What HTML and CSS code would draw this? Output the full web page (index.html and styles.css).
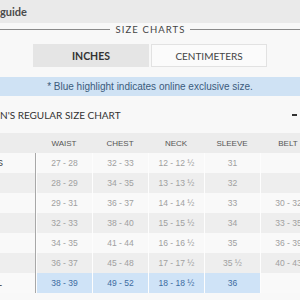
FILE: index.html
```html
<!DOCTYPE html>
<html>
<head>
<meta charset="utf-8">
<link rel="stylesheet" href="styles.css">
</head>
<body>
<div class="top"><span class="crumb">guide</span></div>
<div class="main">
  <div class="title"><span class="rule"></span><h1>SIZE CHARTS</h1><span class="rule"></span></div>
  <div class="tabs">
    <div class="tab active">INCHES</div>
    <div class="tab">CENTIMETERS</div>
  </div>
  <div class="note">* Blue highlight indicates online exclusive size.</div>
  <div class="chart-head"><h2>N'S REGULAR SIZE CHART</h2><span class="toggle"></span></div>
  <div class="grid">
    <div class="hd"></div><div class="hd">WAIST</div><div class="hd">CHEST</div><div class="hd">NECK</div><div class="hd">SLEEVE</div><div class="hd">BELT</div>

    <div class="lab"><span>XXS</span></div><div class="c">27 - 28</div><div class="c">32 - 33</div><div class="c">12 - 12 ½</div><div class="c">31</div><div class="c"></div>
    <div class="lab alt"><span>XS</span></div><div class="c alt">28 - 29</div><div class="c alt">34 - 35</div><div class="c alt">13 - 13 ½</div><div class="c alt">32</div><div class="c alt"></div>
    <div class="lab"><span>S</span></div><div class="c">29 - 31</div><div class="c">36 - 37</div><div class="c">14 - 14 ½</div><div class="c">33</div><div class="c">30 - 32</div>
    <div class="lab alt"><span>M</span></div><div class="c alt">32 - 33</div><div class="c alt">38 - 40</div><div class="c alt">15 - 15 ½</div><div class="c alt">34</div><div class="c alt">33 - 35</div>
    <div class="lab"><span>L</span></div><div class="c">34 - 35</div><div class="c">41 - 44</div><div class="c">16 - 16 ½</div><div class="c">35</div><div class="c">36 - 39</div>
    <div class="lab alt"><span>XL</span></div><div class="c alt">36 - 37</div><div class="c alt">45 - 48</div><div class="c alt">17 - 17 ½</div><div class="c alt">35 ½</div><div class="c alt">40 - 43</div>
    <div class="lab"><span>XXL</span></div><div class="c hl">38 - 39</div><div class="c hl">49 - 52</div><div class="c hl">18 - 18 ½</div><div class="c hl">36</div><div class="c"></div>
  </div>
</div>
</body>
</html>
```
FILE: styles.css
```css
html, body {
  margin: 0;
  padding: 0;
  width: 300px;
  height: 300px;
  overflow: hidden;
  background: #f8f8f8;
}
body {
  font-family: "Lato", "Liberation Sans", sans-serif;
  color: #444;
}
.top {
  height: 23px;
  background: #eaeaea;
  display: flex;
  align-items: center;
}
.crumb {
  font-size: 11px;
  font-weight: 700;
  color: #4a4a4a;
  line-height: 1;
}
.main {
  background: #f8f8f8;
}
.title {
  height: 13px;
  display: flex;
  align-items: center;
}
.rule {
  flex: 1;
  height: 1px;
  background: #8a8a8a;
}
.title h1 {
  margin: 0 4px 0 5px;
  font-size: 9.5px;
  font-weight: 400;
  letter-spacing: 1.1px;
  color: #444;
  line-height: 1;
}
.tabs {
  display: flex;
  justify-content: center;
  margin-top: 8px;
}
.tab {
  width: 114px;
  height: 21px;
  border: 1px solid #e2e2e2;
  background: #fbfbfb;
  display: flex;
  align-items: center;
  justify-content: center;
  font-size: 10px;
  color: #444;
}
.tab.active {
  background: #e5e5e5;
  border-color: #e5e5e5;
  font-weight: 700;
  font-size: 10.5px;
  color: #333;
  margin-right: 2px;
}
.note {
  margin-top: 10px;
  height: 19px;
  background: #cfe2f4;
  display: flex;
  align-items: center;
  justify-content: center;
  font-family: "Liberation Sans", Arial, sans-serif;
  font-size: 10px;
  color: #3b5b7c;
}
.chart-head {
  height: 37px;
  display: flex;
  align-items: center;
  justify-content: space-between;
}
.chart-head h2 {
  margin: 0;
  font-size: 10px;
  font-weight: 400;
  color: #333;
}
.toggle {
  width: 5px;
  height: 2px;
  background: #333;
  margin-right: 3px;
}
.grid {
  width: 316px;
  display: grid;
  grid-template-columns: 36px repeat(5, 56px);
  grid-auto-rows: 20px;
  font-family: "Liberation Sans", Arial, sans-serif;
}
.hd {
  height: 21px;
  background: #ececec;
  display: flex;
  align-items: center;
  justify-content: center;
  font-size: 8px;
  color: #555;
}
.c {
  background: #f9f9f9;
  border-left: 1px solid #fdfdfd;
  display: flex;
  align-items: center;
  justify-content: center;
  font-size: 8.5px;
  color: #a0a0a0;
}
.c.alt {
  background: #eeeeee;
}
.c.hl {
  background: #cfe3f7;
  color: #3d6c9f;
}
.lab {
  background: #f9f9f9;
  border-right: 1px solid #a8a8a8;
  overflow: hidden;
  font-size: 9px;
  line-height: 20px;
  color: #333;
  white-space: nowrap;
  text-indent: -15px;
}
.lab.alt {
  background: #eeeeee;
}
```
